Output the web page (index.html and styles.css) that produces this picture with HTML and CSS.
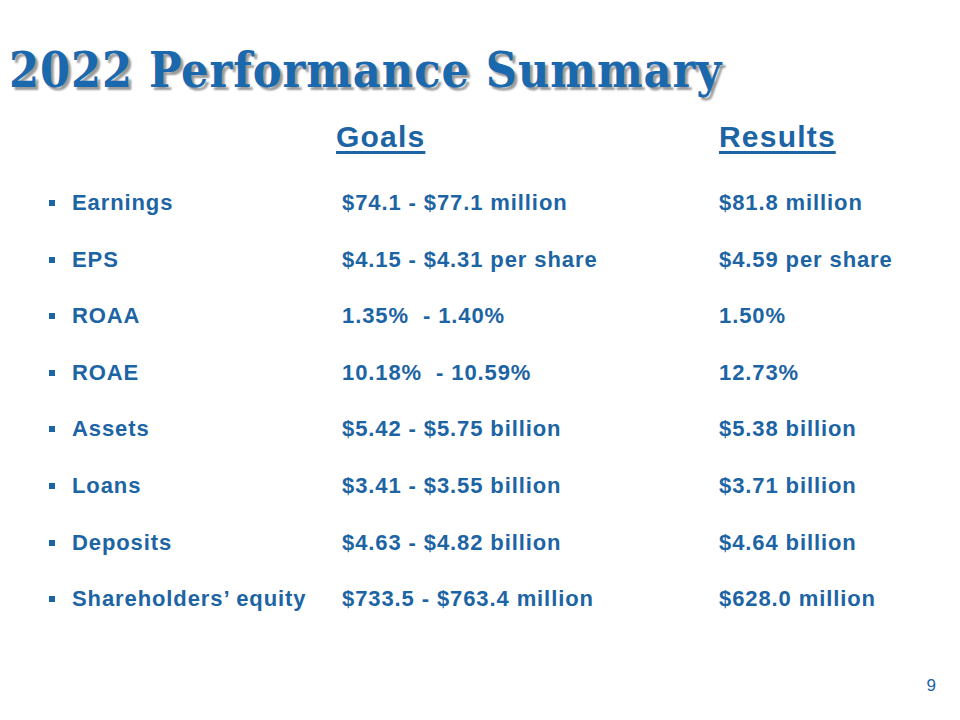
FILE: index.html
```html
<!DOCTYPE html>
<html>
<head>
<meta charset="utf-8">
<link rel="stylesheet" href="styles.css">
</head>
<body>
<div class="slide">
  <h1 class="title">2022 Performance Summary</h1>
  <div class="table">
    <div class="head-row">
      <span class="h-goals">Goals</span>
      <span class="h-results">Results</span>
    </div>
    <ul class="rows">
      <li class="row"><span class="label">Earnings</span><span class="goal">$74.1 - $77.1 million</span><span class="result">$81.8 million</span></li>
      <li class="row"><span class="label">EPS</span><span class="goal">$4.15 - $4.31 per share</span><span class="result">$4.59 per share</span></li>
      <li class="row"><span class="label">ROAA</span><span class="goal">1.35% &nbsp;- 1.40%</span><span class="result">1.50%</span></li>
      <li class="row"><span class="label">ROAE</span><span class="goal">10.18% &nbsp;- 10.59%</span><span class="result">12.73%</span></li>
      <li class="row"><span class="label">Assets</span><span class="goal">$5.42 - $5.75 billion</span><span class="result">$5.38 billion</span></li>
      <li class="row"><span class="label">Loans</span><span class="goal">$3.41 - $3.55 billion</span><span class="result">$3.71 billion</span></li>
      <li class="row"><span class="label">Deposits</span><span class="goal">$4.63 - $4.82 billion</span><span class="result">$4.64 billion</span></li>
      <li class="row"><span class="label">Shareholders’ equity</span><span class="goal">$733.5 - $763.4 million</span><span class="result">$628.0 million</span></li>
    </ul>
  </div>
  <div class="page-num">9</div>
</div>
</body>
</html>
```
FILE: styles.css
```css
html, body {
  margin: 0;
  padding: 0;
  background: #ffffff;
}
.slide {
  width: 960px;
  height: 720px;
  position: relative;
  color: #1c64a4;
  font-family: "Liberation Sans", Arial, sans-serif;
  display: flex;
  flex-direction: column;
}
.title {
  margin: 42px 0 0 9px;
  font-family: "DejaVu Serif Condensed", "DejaVu Serif", serif;
  font-weight: bold;
  font-size: 48px;
  line-height: 56px;
  letter-spacing: 0.95px;
  color: #1a68ad;
  text-shadow: 3px 3px 2px #9a9a9a;
}
.table {
  margin-top: 20px;
}
.head-row {
  display: grid;
  grid-template-columns: 336px 383px auto;
  font-weight: bold;
  font-size: 30px;
  line-height: 38px;
  letter-spacing: 1.2px;
}
.h-goals, .h-results {
  text-decoration: underline;
  text-underline-offset: 4px;
  text-decoration-thickness: 3px;
}
.h-goals { grid-column: 2; }
.h-results { grid-column: 3; }
.rows {
  list-style: none;
  margin: 35px 0 0 0;
  padding: 0;
  display: flex;
  flex-direction: column;
  gap: 32.6px;
}
.row {
  display: grid;
  grid-template-columns: 72px 270px 377px auto;
  font-weight: bold;
  font-size: 22px;
  line-height: 24px;
  letter-spacing: 0.9px;
  align-items: center;
}
.row::before {
  content: "";
  width: 6px;
  height: 6px;
  background: #1c64a4;
  margin-left: 49px;
}
.page-num {
  position: absolute;
  right: 24px;
  top: 676px;
  font-size: 17px;
}
```
